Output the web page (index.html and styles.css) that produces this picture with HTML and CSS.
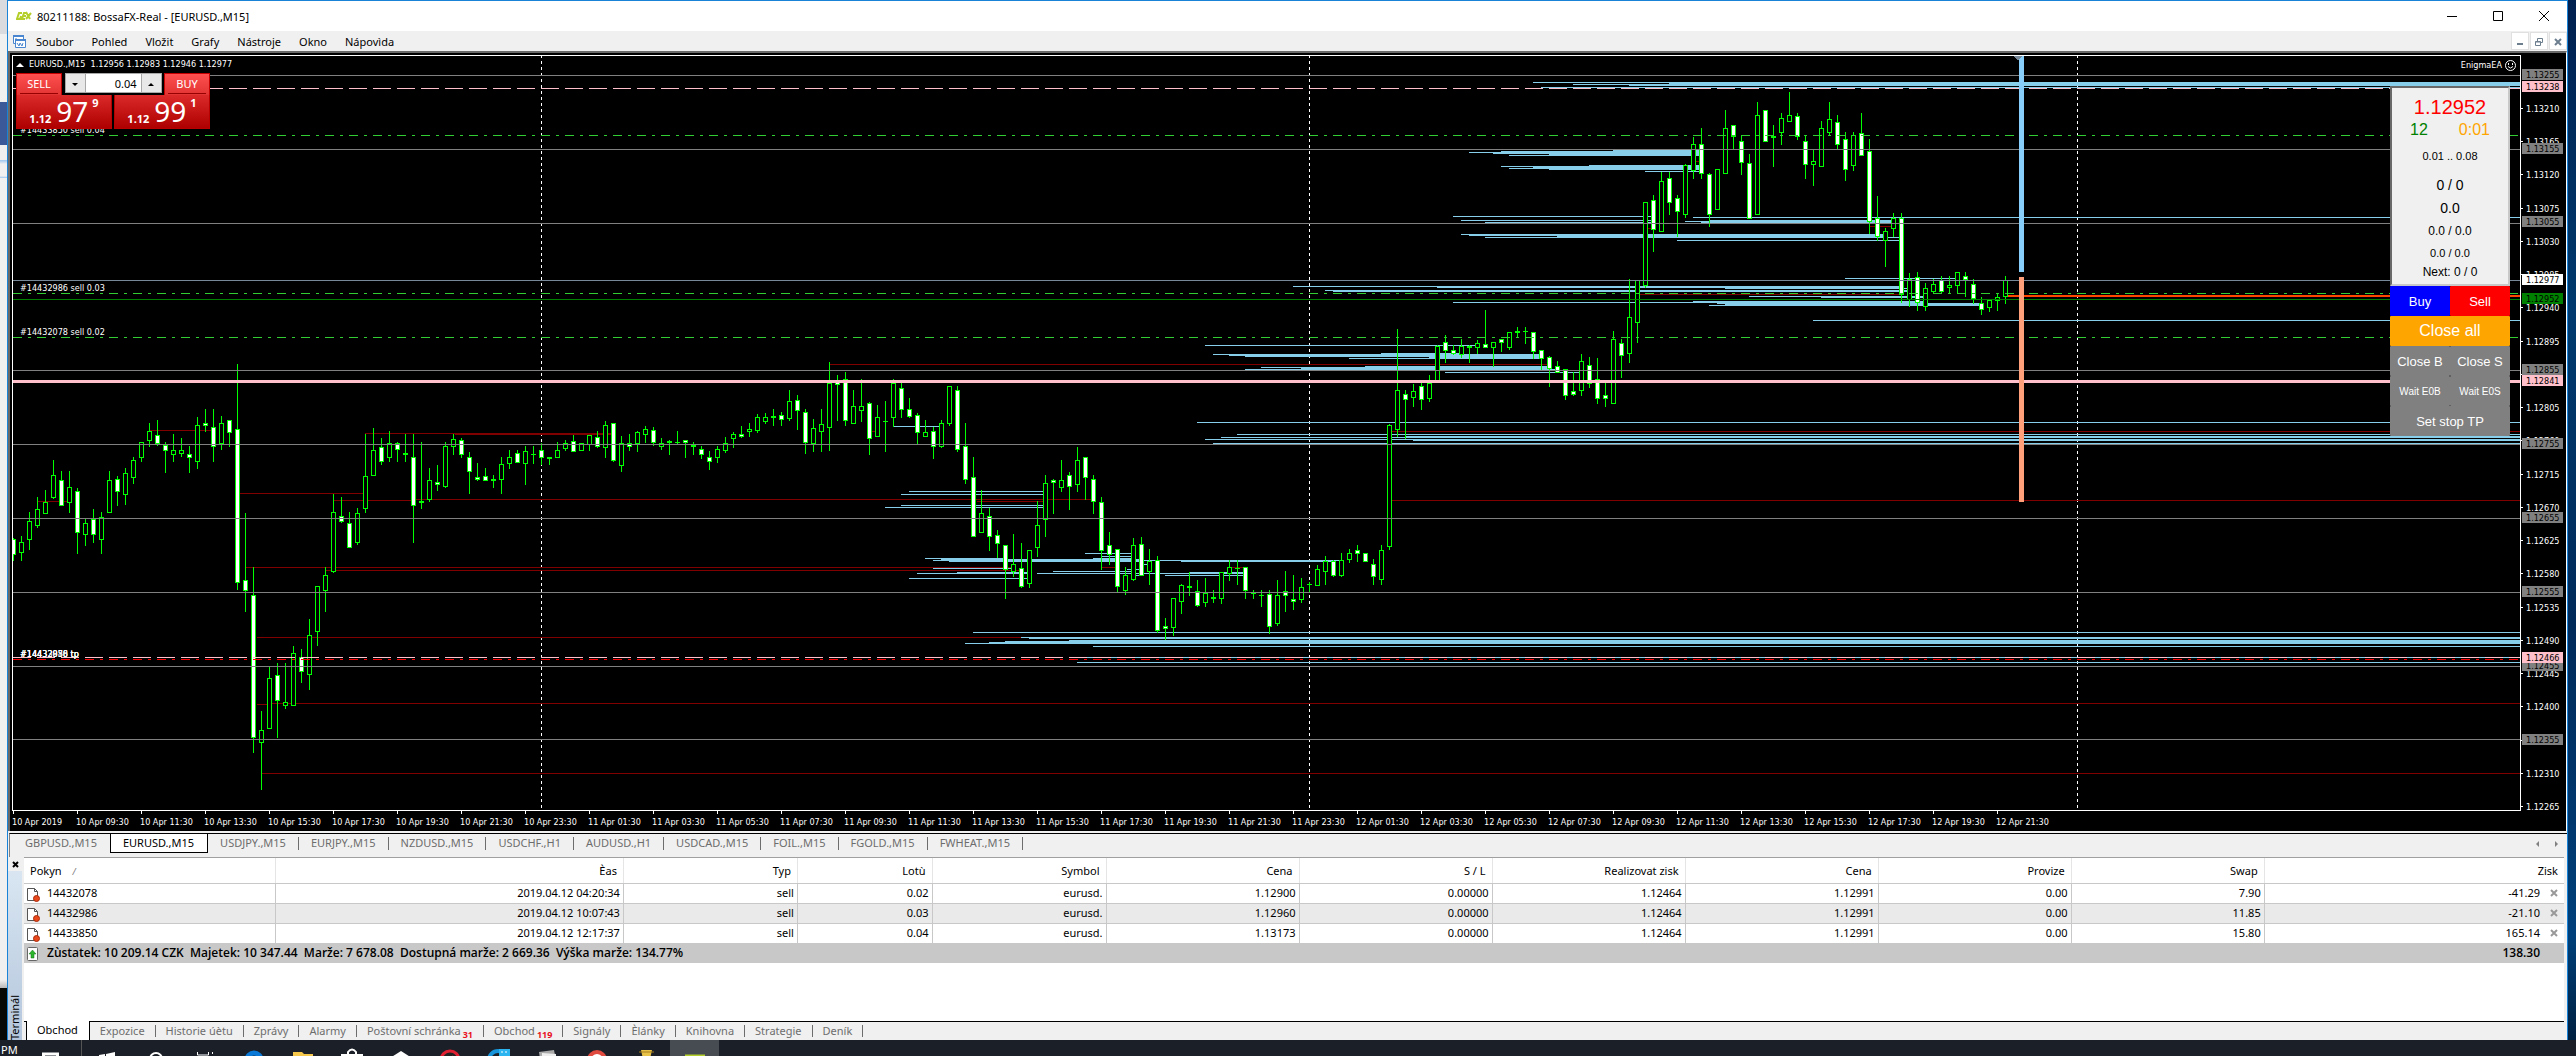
FILE: index.html
```html
<!DOCTYPE html>
<html lang="cs">
<head>
    <meta charset="UTF-8">
    <meta name="viewport" content="width=device-width, initial-scale=1.0">
    <title>80211188: BossaFX-Real - [EURUSD.,M15]</title>
    <link rel="stylesheet" href="styles.css">
</head>
<body>
    <div class="desktop">
        <div class="behind-left"></div>
        <div class="window">
            <header class="titlebar">
                <svg class="logo" width="16" height="10" viewBox="0 0 16 10" fill="none" stroke="#b5cf2a" stroke-width="2"><path d="M6 2H3L1 8h3l1-3M11 2H8L6 8h3M7 5h3M10 1l4 7M15 2l-5 6"/></svg>
                <h1>80211188: BossaFX-Real - [EURUSD.,M15]</h1>
                <div class="win-buttons">
                    <button aria-label="Minimalizovat"><svg width="10" height="10"><path d="M0 5.5h10"/></svg></button>
                    <button aria-label="Maximalizovat"><svg width="10" height="10"><path d="M.5 .5h9v9h-9z"/></svg></button>
                    <button aria-label="Zavřít"><svg width="10" height="10"><path d="M0 0l10 10M10 0L0 10"/></svg></button>
                </div>
            </header>
            <nav class="menubar">
                <svg class="menu-icon" width="15" height="15" viewBox="0 0 15 15" fill="#fff" stroke="#4a86cf"><path d="M1.500 1.500h10v8h-10z"/><path d="M1 2h11" stroke-width="2"/><path d="M4 4v3l2-2v3" fill="none"/><path d="M3.500 5.500h10v8h-10z"/><path d="M3 6h11" stroke-width="2"/><path d="M5 9l2 3 1-3 2 3 1-3" fill="none"/></svg>
                <button>Soubor</button>
                <button>Pohled</button>
                <button>Vložit</button>
                <button>Grafy</button>
                <button>Nástroje</button>
                <button>Okno</button>
                <button>Nápovìda</button>
                <div class="mdi-buttons">
                    <button aria-label="Minimalizovat graf"><svg width="8" height="8"><path d="M1 6h6"/></svg></button>
                    <button aria-label="Obnovit graf"><svg width="8" height="8"><path class="thin" d="M2.500 3V.5h5v4H6M.5 3.500h5v4h-5zM.5 4h5"/></svg></button>
                    <button aria-label="Zavřít graf"><svg width="8" height="8"><path d="M1 1l6 6M7 1L1 7"/></svg></button>
                </div>
            </nav>

            <main class="chart">
                <div class="plot">
                    <svg id="plot" width="100%" height="754"></svg>
                    <div class="chart-title"><span class="caret"></span>EURUSD.,M15&nbsp; 1.12956 1.12983 1.12946 1.12977</div>
                    <div class="ea-name">EnigmaEA
                        <svg width="11" height="11" viewBox="0 0 11 11" fill="none" stroke="#fff"><circle cx="5.500" cy="5.500" r="5"/><path d="M3 6.500q2.500 3 5 0M3.500 3v2M7.500 3v2"/></svg>
                    </div>
                    <div class="one-click">
                        <button class="side">SELL</button>
                        <div class="lots">
                            <button aria-label="Méně"><span class="down"></span></button>
                            <input type="text" value="0.04" aria-label="Lotů">
                            <button aria-label="Více"><span class="up"></span></button>
                        </div>
                        <button class="side">BUY</button>
                        <button class="quote"><b>1.12</b><span>97</span><sup>9</sup></button>
                        <button class="quote"><b>1.12</b><span>99</span><sup>1</sup></button>
                    </div>
                    <aside class="ea-panel">
                        <div class="ea-info">
                            <p class="price">1.12952</p>
                            <p class="timer"><span class="green">12</span><span class="orange">0:01</span></p>
                            <p class="range">0.01 .. 0.08</p>
                            <p class="count">0 / 0</p>
                            <p class="total">0.0</p>
                            <p class="pair">0.0 / 0.0</p>
                            <p class="pair-small">0.0 / 0.0</p>
                            <p class="next">Next: 0 / 0</p>
                        </div>
                        <div class="ea-buttons">
                            <button class="buy">Buy</button>
                            <button class="sell">Sell</button>
                            <button class="all wide">Close all</button>
                            <button>Close B</button>
                            <button>Close S</button>
                            <button class="wait">Wait E0B</button>
                            <button class="wait">Wait E0S</button>
                            <button class="wide">Set stop TP</button>
                        </div>
                    </aside>
                </div>
                <svg id="prices" width="45" height="756"></svg>
                <div class="times" id="times"></div>
            </main>

            <nav class="chart-tabs">
                <a href="#">GBPUSD.,M15</a>
                <a href="#" class="active">EURUSD.,M15</a>
                <a href="#">USDJPY.,M15</a>
                <a href="#">EURJPY.,M15</a>
                <a href="#">NZDUSD.,M15</a>
                <a href="#">USDCHF.,H1</a>
                <a href="#">AUDUSD.,H1</a>
                <a href="#">USDCAD.,M15</a>
                <a href="#">FOIL.,M15</a>
                <a href="#">FGOLD.,M15</a>
                <a href="#">FWHEAT.,M15</a>
                <div class="scroll-arrows"><span class="left"></span><span class="right"></span></div>
            </nav>

            <section class="terminal">
                <div class="caption">
                    <button aria-label="Zavřít terminál"><svg width="7" height="7"><path d="M1 1l5 5M6 1L1 6"/></svg></button>
                    <span>Terminál</span>
                </div>
                <div class="terminal-body">
                    <table>
                        <colgroup>
                            <col class="c-order"><col class="c-time"><col class="c-type"><col class="c-lots"><col class="c-symbol">
                            <col class="c-price"><col class="c-price"><col class="c-price"><col class="c-price"><col class="c-price"><col class="c-price"><col>
                        </colgroup>
                        <thead>
                            <tr><th>Pokyn <i>/</i></th><th>Èas</th><th>Typ</th><th>Lotù</th><th>Symbol</th><th>Cena</th><th>S / L</th><th>Realizovat zisk</th><th>Cena</th><th>Provize</th><th>Swap</th><th>Zisk</th></tr>
                        </thead>
                        <tbody id="orders"></tbody>
                        <tfoot>
                            <tr>
                                <td colspan="11"><svg class="row-icon" width="14" height="14" viewBox="0 0 14 14"><rect x="1.500" y=".5" width="10" height="13" rx="1" fill="#fff" stroke="#666"/><path d="M6.500 3L10 7H8v4H5V7H3z" fill="#2db52d" stroke="#157015" stroke-width=".5"/></svg>Zùstatek: 10 209.14 CZK&nbsp; Majetek: 10 347.44&nbsp; Marže: 7 678.08&nbsp; Dostupná marže: 2 669.36&nbsp; Výška marže: 134.77%</td>
                                <td>138.30</td>
                            </tr>
                        </tfoot>
                    </table>
                    <nav class="terminal-tabs">
                        <a href="#" class="active">Obchod</a>
                        <a href="#">Expozice</a>
                        <a href="#">Historie úètu</a>
                        <a href="#">Zprávy</a>
                        <a href="#">Alarmy</a>
                        <a href="#">Poštovní schránka<sub>31</sub></a>
                        <a href="#">Obchod<sub>119</sub></a>
                        <a href="#">Signály</a>
                        <a href="#">Èlánky</a>
                        <a href="#">Knihovna</a>
                        <a href="#">Strategie</a>
                        <a href="#">Deník</a>
                    </nav>
                </div>
            </section>
        </div>
        <div class="behind-right"></div>
    </div>

    <footer class="taskbar">
        <span class="clock">PM</span>
        <span class="first"><svg width="24" height="24"><path d="M5.500 6h14v14h-14z" fill="none" stroke="#fff" stroke-width="3"/></svg></span>
        <span><svg width="24" height="24" fill="#fff"><path d="M4 7l6-1v7H4zM11 6l9-2v9h-9z"/></svg></span>
        <span><svg width="24" height="24" fill="none" stroke="#fff" stroke-width="2"><circle cx="12" cy="11" r="6"/></svg></span>
        <span><svg width="24" height="24" fill="none" stroke="#fff"><path d="M4.500 4v3h11V4M19.500 4v2M19.500 8v8M4.500 16V9.500h11"/></svg></span>
        <span><svg width="24" height="24" fill="none" stroke="#0a78d7" stroke-width="5"><circle cx="12" cy="12" r="7"/></svg></span>
        <span><svg width="24" height="24"><path d="M2 4h9l2 2h9v14H2z" fill="#f5c84c"/><path d="M2 8h20v10H2z" fill="#fde59a"/></svg></span>
        <span><svg width="24" height="24"><path d="M8 8V4q4-5 8 0v4" fill="none" stroke="#fff" stroke-width="2"/><path d="M1 6h22v14H1z" fill="#fff"/></svg></span>
        <span><svg width="24" height="24" fill="#fff"><path d="M1 10l11-7 11 7v12H1z"/></svg></span>
        <span><svg width="24" height="24"><circle cx="12" cy="12" r="9" fill="#222" stroke="#e02030" stroke-width="3"/><path d="M9 9l3 3 3-4" stroke="#e02030" stroke-width="2" fill="none"/></svg></span>
        <span><svg width="24" height="24"><circle cx="11" cy="12" r="9" fill="none" stroke="#1795dc" stroke-width="4"/><path d="M12 1h11v9H12z" fill="#2cb4f0"/><path d="M15 3v2M19 3v2" stroke="#fff"/></svg></span>
        <span><svg width="24" height="24"><path d="M3 4l15-2 3 16H5z" fill="#aaa"/><path d="M6 5l14 1v14H6z" fill="#eee"/></svg></span>
        <span><svg width="24" height="24"><circle cx="12" cy="12" r="10" fill="#e04a3f"/><circle cx="12" cy="12" r="5" fill="#4a8af4" stroke="#fff" stroke-width="2"/></svg></span>
        <span><svg width="24" height="24"><path d="M7 2h11l-2 9h-7z" fill="#e8c34a"/><path d="M5 4h15" stroke="#a67c1a"/></svg></span>
        <span class="running"><svg width="24" height="24"><path d="M2 8h20" stroke="#b5cf2a" stroke-width="3"/></svg></span>
    </footer>
    <script src="chart.js"></script>
</body>
</html>
```
FILE: styles.css
```css
* {
    box-sizing: border-box;
}
body {
    margin: 0;
    min-height: 100vh;
    display: flex;
    flex-direction: column;
    font-family: "Noto Sans", "Open Sans", sans-serif;
    font-size: 11px;
    background: #1b2028;
    color: #000;
}
button, input {
    font: inherit;
    margin: 0;
    padding: 0;
    border: none;
    background: none;
    color: inherit;
}
a {
    color: inherit;
    text-decoration: none;
}
.desktop {
    flex: 1;
    display: flex;
}
.behind-left {
    width: 7px;
    background: linear-gradient(#d9dbde 34px, #f0f0f0 34px, #f0f0f0 102px, #3b5998 102px, #3b5998 145px, #f0f0f0 145px, #f0f0f0 160px, #9cc4ee 160px, #f0f0f0 164px, #f0f0f0 176px, #9cc4ee 178px, #f0f0f0 178px, #f0f0f0 980px, #b8b8b8 988px, #050805 988px);
}
.behind-right {
    width: 8px;
    background: linear-gradient(#002050, #003a6e 30%, #002a5a 60%, #00407a 90%, #002040);
}
.window {
    flex: 1;
    min-width: 0;
    display: flex;
    flex-direction: column;
    background: #f0f0f0;
    border: 1px solid #1883d7;
    border-bottom: none;
}

/* title + menu */
.titlebar {
    height: 30px;
    display: flex;
    align-items: center;
    background: #fff;
    padding-left: 8px;
}
.titlebar h1 {
    margin: 0 auto 0 5px;
    font-size: 11px;
    font-weight: normal;
}
.win-buttons {
    display: flex;
}
.win-buttons button {
    width: 46px;
    height: 29px;
}
.win-buttons svg {
    fill: none;
    stroke: #000;
}
.menubar {
    height: 20px;
    display: flex;
    align-items: center;
    padding-left: 4px;
}
.menubar > button {
    padding: 0 9px;
}
.mdi-buttons {
    display: flex;
    gap: 1px;
    margin-left: auto;
}
.mdi-buttons button {
    width: 18px;
    height: 18px;
    background: #fff;
    border: 1px solid #e0e0e0;
}
.mdi-buttons svg {
    fill: none;
    stroke: #6d7f8f;
    stroke-width: 2;
}
.mdi-buttons .thin {
    stroke-width: 1;
}

/* chart */
.chart {
    display: grid;
    grid-template-columns: 1fr 45px;
    background: #000;
    color: #fff;
    font-family: "DejaVu Sans Condensed", "Noto Sans", sans-serif;
    font-size: 9px;
    border-top: 2px solid #696969;
    border-left: 2px solid #696969;
    border-right: 1px solid #fff;
    padding: 2px 0 0 2px;
}
.plot {
    position: relative;
    border: 1px solid #fff;
    height: 756px;
}
.plot > svg, #prices {
    display: block;
}
.times {
    grid-column: 1 / -1;
    display: flex;
    height: 20px;
    line-height: 17px;
    white-space: nowrap;
    overflow: hidden;
}
.times span {
    width: 64px;
    flex: none;
}
.times span::before {
    content: "";
    display: block;
    width: 1px;
    height: 3px;
    margin-left: 1px;
    background: #fff;
}
.chart-title {
    position: absolute;
    left: 3px;
    top: 2px;
    line-height: 12px;
}
.caret {
    display: inline-block;
    border: 4px solid transparent;
    border-top: none;
    border-bottom-color: #fff;
    margin-right: 5px;
}
.ea-name {
    position: absolute;
    right: 4px;
    top: 3px;
    display: flex;
    gap: 3px;
    align-items: center;
    line-height: 12px;
}

.one-click {
    position: absolute;
    left: 3px;
    top: 17px;
    width: 194px;
    display: flex;
    flex-wrap: wrap;
    justify-content: space-between;
    font-family: "Noto Sans", sans-serif;
    background: #000;
}
.side {
    width: 46px;
    height: 22px;
    font-size: 11px;
    line-height: 19px;
    color: #fff;
    background: linear-gradient(#ff5050, #e33434);
    border: 1px solid #c40000;
    border-bottom: none;
}
.side::after {
    content: "";
    display: block;
    height: 2px;
    margin: 0 3px;
    border-top: 1px solid #960000;
    border-bottom: 1px solid #ff7a7a;
}
.lots {
    width: 97px;
    height: 20px;
    display: flex;
    background: #fff;
    border: 1px solid #a8a8a8;
}
.lots button {
    width: 19px;
    background: #e8e8e8;
}
.lots input {
    flex: 1;
    min-width: 0;
    text-align: right;
    padding-right: 4px;
    font-size: 11px;
    color: #000;
    border: solid #a8a8a8;
    border-width: 0 1px;
}
.up, .down {
    display: inline-block;
    vertical-align: middle;
    border: 3px solid transparent;
}
.up {
    border-top: none;
    border-bottom-color: #000;
}
.down {
    border-bottom: none;
    border-top-color: #000;
}
.quote {
    width: 96px;
    height: 34px;
    display: flex;
    justify-content: center;
    align-items: flex-end;
    color: #fff;
    background: linear-gradient(#dc2a2a, #ae0000);
    border: 1px solid #b80000;
    border-top: none;
}
.quote b {
    font-size: 11px;
    line-height: 18px;
    margin-right: 5px;
}
.quote span {
    font-size: 28px;
    line-height: 33px;
}
.quote sup {
    font-size: 11px;
    font-weight: bold;
    line-height: 16px;
    align-self: flex-start;
    margin-left: 4px;
}

/* expert advisor panel */
.ea-panel {
    position: absolute;
    right: 10px;
    top: 30px;
    width: 120px;
    font-family: "Liberation Sans", Arial, sans-serif;
    text-align: center;
}
.ea-info {
    background: #f0f0f0;
    color: #000;
    border: 2px solid #696969;
    border-right-color: #c8c8c8;
    border-bottom-color: #c8c8c8;
    padding: 7px 0 1px;
}
.ea-info p {
    margin: 0;
}
.ea-info .price { font-size: 20px; line-height: 24px; color: #f00; }
.ea-info .timer { font-size: 16px; line-height: 22px; display: flex; justify-content: center; gap: 31px; }
.ea-info .range { font-size: 11px; line-height: 30px; }
.ea-info .count { font-size: 14px; line-height: 28px; }
.ea-info .total { font-size: 14px; line-height: 18px; }
.ea-info .pair { font-size: 12px; line-height: 28px; }
.ea-info .pair-small { font-size: 11px; line-height: 16px; }
.ea-info .next { font-size: 12px; line-height: 22px; }
.green { color: #008000; }
.orange { color: #ffa500; }
.ea-buttons {
    display: grid;
    grid-template-columns: 1fr 1fr;
    grid-auto-rows: 30px;
}
.ea-buttons button {
    background: #808080;
    color: #fff;
    font-size: 13px;
    border-radius: 1px;
}
.ea-buttons .wide { grid-column: span 2; }
.ea-buttons .buy { background: #00f; }
.ea-buttons .sell { background: #f00; }
.ea-buttons .all { background: #ffa500; font-size: 16px; }
.ea-buttons .wait { font-size: 10px; }

/* svg parts */
#plot { shape-rendering: crispEdges; }
#plot text, #prices text {
    font-size: 9px;
    fill: #fff;
}
#prices .on-mark { fill: #000; }
.maroon { stroke: #800000; }
.sky { stroke: #87ceeb; }
.candle { stroke: #0f0; }
.grid-line { stroke: #808080; }
.bid-line { stroke: #778899; }
.ma-line { stroke: #008000; }
.order-line { stroke: #32cd32; stroke-dasharray: 9 6 3 6; }
.tp-line { stroke: #f00; stroke-dasharray: 9 6 3 6; }
.pink-dash { stroke: #ffc0cb; stroke-dasharray: 18 6; }
.pink-bold { stroke: #ffc0cb; stroke-width: 3; }
.day { stroke: #fff; stroke-dasharray: 3 3; }

/* chart tabs */
.chart-tabs {
    display: flex;
    height: 24px;
    margin: 2px 0 0 1px;
    padding-bottom: 4px;
    border-top: 1px solid #000;
    border-left: 1px solid #808080;
    color: #6d6d6d;
}
.chart-tabs a {
    position: relative;
    padding: 0 13px 0 12px;
    line-height: 18px;
}
.chart-tabs a:first-child {
    padding-left: 15px;
}
.chart-tabs a::after, .terminal-tabs a::after {
    content: "";
    position: absolute;
    right: 0;
    top: 3px;
    bottom: 3px;
    border-right: 1px solid #6d6d6d;
}
.chart-tabs a:first-child::after, a.active::after {
    display: none;
}
.chart-tabs .active {
    background: #fff;
    color: #000;
    border: solid #000;
    border-width: 0 1px 1px;
}
.scroll-arrows {
    margin-left: auto;
    display: flex;
    align-items: center;
    gap: 16px;
    padding-right: 9px;
}
.scroll-arrows span {
    border: 3px solid transparent;
}
.scroll-arrows .left { border-left: none; border-right-color: #808080; }
.scroll-arrows .right { border-right: none; border-left-color: #808080; }

/* terminal */
.terminal {
    flex: 1;
    display: flex;
    border-right: 3px solid #f0f0f0;
}
.caption {
    width: 16px;
    display: flex;
    flex-direction: column;
    border-right: 2px solid #f0f0f0;
    overflow: hidden;
}
.caption button {
    height: 14px;
    line-height: 10px;
}
.caption button svg {
    stroke: #000;
    stroke-width: 2;
}
.caption span {
    flex: 1;
    writing-mode: vertical-rl;
    transform: rotate(180deg);
    line-height: 14px;
    background: linear-gradient(#b4c6dc, #d9e6f2);
}
.terminal-body {
    flex: 1;
    min-width: 0;
    display: flex;
    flex-direction: column;
    background: #fff;
    border-top: 1px solid #a0a0a0;
}
table {
    width: 100%;
    table-layout: fixed;
    border-collapse: collapse;
}
.c-order { width: 9.900%; }
.c-time { width: 13.700%; }
.c-type { width: 6.850%; }
.c-lots { width: 5.300%; }
.c-symbol { width: 6.850%; }
.c-price { width: 7.600%; }
th {
    height: 25px;
    padding: 0 6px 0 0;
    font-weight: normal;
    text-align: right;
    border-right: 1px solid #e5e5e5;
    border-bottom: 1px solid #c8c8c8;
}
th:first-child {
    text-align: left;
    padding-left: 6px;
}
th i {
    font-size: 9px;
    color: #777;
    margin-left: 8px;
}
td {
    height: 20px;
    padding: 0 3px 0 0;
    line-height: 18px;
    text-align: right;
    border-right: 1px solid #c8c8c8;
    border-bottom: 1px solid #c8c8c8;
    white-space: nowrap;
}
td:first-child {
    text-align: left;
    padding-left: 2px;
}
tbody tr:nth-child(even) {
    background: #eaeaea;
}
th:last-child, td:last-child {
    border-right: none;
}
td:last-child {
    padding-right: 6px;
}
tfoot td {
    background: #c8c8c8;
    font-family: "Open Sans", "Noto Sans", sans-serif;
    font-size: 12px;
    font-weight: 600;
    border: none;
}
tfoot td:last-child {
    padding-right: 24px;
}
.row-icon {
    vertical-align: middle;
    margin-right: 7px;
}
.close-order {
    margin-left: 9px;
    width: 9px;
}
.close-order svg {
    stroke: #999;
    stroke-width: 2;
}
.terminal-tabs {
    display: flex;
    height: 19px;
    margin-top: auto;
    padding-left: 2px;
    background: #f0f0f0;
    border-top: 1px solid #000;
    color: #6d6d6d;
}
.terminal-tabs a {
    position: relative;
    padding: 0 11px 0 10px;
    line-height: 18px;
    white-space: nowrap;
}
.terminal-tabs .active {
    margin-top: -1px;
    background: #fff;
    color: #000;
    border: solid #000;
    border-width: 0 1px;
}
.terminal-tabs sub {
    font-size: 9px;
    font-weight: bold;
    line-height: 0;
    color: #e81123;
    margin-left: 2px;
}

/* taskbar */
.taskbar {
    height: 16px;
    overflow: hidden;
    display: flex;
    background: #1b2028;
}
.taskbar span {
    width: 49px;
    flex: none;
    padding-top: 8px;
    text-align: center;
}
.taskbar .clock {
    width: 24px;
    padding: 0 0 0 1px;
    line-height: 20px;
    text-align: left;
    color: #fff;
}
.taskbar .first {
    width: 58px;
    padding-right: 6px;
    border-right: 1px solid #555;
}
.taskbar .running {
    background: #474c52;
}
```
FILE: chart.js
```js
// candles: high, body top, body bottom, low, 1 = up / 0 = down, one every 8px
const candles = [
    [538,539,554,561,0],[536,542,552,561,1],[512,521,539,550,1],[497,509,525,528,1],[490,502,513,513,1],
    [460,475,497,499,1],[471,480,505,506,0],[471,487,502,513,1],[488,491,532,554,0],[518,523,534,546,1],
    [509,519,534,543,0],[512,517,539,554,1],[471,480,512,512,1],[476,479,491,506,0],[468,473,494,505,1],
    [457,460,477,484,1],[442,442,457,462,1],[423,431,440,447,1],[420,435,443,446,0],[442,445,450,473,0],
    [434,450,454,462,1],[438,450,453,457,1],[446,454,457,473,0],[417,425,461,469,1],[409,423,425,432,0],
    [409,427,446,462,0],[416,423,443,450,1],[420,420,432,447,0],[364,429,582,590,0],[513,580,590,612,0],
    [567,595,737,753,0],[711,730,742,790,1],[667,678,728,728,1],[663,675,700,738,0],[663,702,705,709,1],
    [646,653,705,705,1],[649,657,671,683,0],[619,635,674,690,1],[586,586,631,646,1],[567,575,590,612,1],
    [494,512,571,573,1],[497,516,521,523,0],[512,523,547,547,0],[508,513,542,545,1],[434,476,508,513,1],
    [428,450,475,476,1],[438,447,461,465,0],[431,443,457,462,1],[442,443,449,462,0],[434,453,454,462,1],
    [434,457,505,543,0],[442,501,502,509,1],[468,480,499,502,1],[465,482,484,491,0],[442,446,486,488,1],
    [434,439,446,455,1],[438,440,454,458,0],[452,457,471,494,0],[463,477,479,481,0],[468,476,480,481,0],
    [475,479,480,488,1],[457,464,479,494,1],[450,457,463,469,1],[450,453,462,463,0],[446,451,463,485,1],
    [446,454,454,464,1],[443,450,457,465,0],[457,457,458,465,1],[442,450,457,458,1],[440,443,448,451,1],
    [435,441,451,452,0],[443,443,450,450,1],[435,435,444,451,1],[431,437,446,448,0],[421,425,447,458,1],
    [423,423,460,462,0],[436,443,465,472,1],[434,443,446,451,0],[431,432,443,452,1],[426,429,434,443,1],
    [427,430,442,446,0],[438,443,446,450,1],[440,441,442,455,1],[431,442,442,444,1],[440,440,442,458,0],
    [442,445,446,455,1],[446,449,454,459,0],[451,457,461,470,0],[446,449,457,463,1],[437,443,450,453,1],
    [432,434,438,448,1],[426,434,436,438,0],[423,429,431,437,1],[414,417,430,433,1],[413,417,421,424,1],
    [409,416,417,426,1],[412,415,419,426,0],[390,401,418,421,1],[395,400,410,430,0],[409,412,442,454,0],
    [419,428,443,452,1],[409,424,431,452,1],[362,383,427,451,1],[375,381,384,421,0],[372,379,420,426,0],
    [390,406,423,424,1],[379,406,410,422,1],[402,403,438,455,0],[405,417,436,437,1],[401,421,421,452,1],
    [379,383,417,427,1],[383,388,409,418,0],[398,409,416,418,0],[413,415,432,444,0],[420,432,436,437,1],
    [427,431,446,459,0],[420,423,446,448,1],[386,386,423,426,1],[386,390,449,452,0],[423,446,479,484,0],
    [457,477,536,537,0],[490,513,532,533,1],[508,516,536,551,0],[530,535,543,558,0],[545,545,569,599,0],
    [534,564,571,577,1],[543,568,586,588,0],[550,550,583,588,1],[501,525,547,557,1],[475,483,519,537,1],
    [479,480,482,514,0],[460,480,487,492,1],[472,475,486,510,0],[447,460,484,492,1],[457,457,477,500,0],
    [475,479,501,514,0],[497,502,550,570,0],[532,545,554,565,0],[549,549,586,592,0],[567,575,590,595,1],
    [538,545,579,581,1],[537,544,575,576,0],[549,561,571,585,1],[556,560,630,633,0],[618,626,628,640,0],
    [598,598,627,636,1],[584,585,601,614,1],[572,586,587,596,1],[580,591,605,607,0],[578,593,602,607,1],
    [590,597,598,603,1],[572,572,598,604,1],[560,567,573,581,1],[560,568,568,585,1],[567,567,590,599,0],
    [590,593,593,599,1],[590,595,595,607,1],[590,594,626,634,0],[580,595,623,626,1],[571,591,595,612,0],
    [575,599,601,610,0],[578,587,599,603,1],[582,584,584,592,1],[565,569,585,585,1],[556,561,571,585,1],
    [560,561,575,577,0],[553,560,575,577,1],[549,553,559,563,1],[545,550,553,562,0],[553,553,561,561,0],
    [559,564,576,585,0],[545,550,579,585,1],[424,425,546,550,1],[329,390,429,437,1],[390,394,399,439,0],
    [384,391,397,407,1],[383,386,399,410,0],[375,383,398,402,1],[345,346,381,381,1],[335,342,350,363,0],
    [345,350,353,355,0],[339,346,354,358,1],[345,346,347,363,1],[340,343,347,354,1],[310,344,347,348,0],
    [342,342,347,367,1],[339,339,342,352,0],[332,332,347,350,1],[327,331,332,337,1],[327,331,331,344,1],
    [332,332,351,359,0],[350,350,358,370,0],[356,357,368,387,0],[361,366,372,373,0],[369,369,395,400,0],
    [372,391,394,396,0],[354,361,390,396,1],[357,365,383,388,0],[358,379,398,404,0],[381,395,398,407,0],
    [331,339,403,404,1],[339,343,355,378,0],[279,317,353,363,1],[280,280,322,343,1],[202,202,285,288,1],
    [195,200,229,252,0],[172,181,231,232,1],[172,178,202,215,0],[195,198,211,237,0],[164,165,214,218,1],
    [137,144,170,179,1],[128,144,173,179,0],[173,174,214,227,0],[169,169,209,210,1],[110,128,173,174,1],
    [125,125,136,149,0],[135,141,162,175,0],[154,163,218,219,0],[102,115,214,214,1],[110,110,141,142,0],
    [125,136,137,167,1],[113,118,132,145,1],[92,115,121,121,1],[113,116,136,140,0],[135,141,164,179,0],
    [150,161,164,186,1],[121,128,166,167,1],[102,119,132,135,1],[115,122,144,149,0],[132,139,169,181,0],
    [132,135,165,171,1],[113,133,155,156,0],[139,151,221,234,0],[196,218,236,241,0],[228,231,240,267,1],
    [213,218,228,237,1],[213,218,294,303,0],[273,279,299,307,1],[272,277,302,311,0],[283,288,306,311,1],
    [279,284,291,294,1],[276,280,291,293,0],[276,285,287,293,1],[272,272,285,293,1],[272,276,279,297,0],
    [279,284,298,304,0],[297,303,309,315,0],[299,300,307,312,1],[293,297,300,311,1],[276,280,296,304,1],
];

const END = 4000;

// level segments: y, from, to
const maroon = [
    [501,38,68],[430,150,212],[493,240,364],[500,334,413],[499,415,1093],[433,365,613],[434,455,613],
    [567,246,1012],[570,326,1020],[637,257,1021],[704,257,268],[703,268,END],[773,262,END],
    [364,829,1548],[431,872,876],[501,977,1045],[567,1102,1117],[567,1229,1245],[161,1695,1700],
    [228,1645,1652],[226,1870,1892],[294,1640,1902],[431,1390,END],[500,1389,END],
];
const sky = [
    [426,893,939],[491,909,1044],[494,901,1044],[505,901,1044],[507,885,1044],
    [558,925,1005],[559,941,1139],[560,933,1341],[561,949,1141],[561,1181,1333],[558,1093,1134],
    [553,1085,1131],[556,1101,1131],[568,933,1012],[572,957,1027],[573,917,1027],[578,909,1027],
    [571,1053,1131],[573,1037,1245],[569,1127,1141],[564,1143,1149],[575,1133,1141],[575,1165,1245],[572,1189,1245],
    [632,973,END],[637,1021,END],[638,1029,END],[640,1069,END],[641,1005,END],[642,989,END],[643,965,END],
    [646,1093,END],[657,1085,END],[662,1077,END],
    [345,1205,1476],[353,1381,1461],[354,1213,1541],[355,1229,1541],[356,1245,1541],[357,1429,1541],[358,1349,1541],
    [366,1365,1549],[367,1261,1549],[368,1301,1549],[369,1245,1557],[372,1445,1580],
    [422,1197,END],[434,1237,END],[436,1405,END],[437,1221,END],[439,1205,END],[440,1413,END],[443,1213,END],
    [320,1813,END],[82,1533,END],[83,1669,END],[84,1573,END],[85,1629,END],[87,1541,END],
    [150,1613,1701],[151,1501,1701],[152,1469,1701],[153,1493,1701],[154,1549,1701],[155,1509,1701],
    [165,1589,1701],[166,1501,1701],[167,1533,1701],[168,1509,1701],[169,1549,1701],[171,1645,1701],
    [216,1453,1653],[220,1461,1653],[222,1485,1653],[217,1693,END],[220,1709,1892],[221,1685,1892],[222,1701,1892],
    [234,1461,1884],[235,1469,1884],[236,1557,1884],[237,1485,1901],[240,1677,1901],
    [278,1845,1960],[286,1293,1901],[287,1437,1901],[288,1725,1909],[290,1325,1909],[291,1333,1909],
    [296,1749,1925],[297,1821,1925],[301,1693,1925],[302,1453,1925],[303,1717,1981],[304,1725,1981],[305,1709,1981],
];

const hline = (cls, y, x1 = 13, x2 = END) => `<path class="${cls}" d="M${x1} ${y + 0.5}H${x2}"/>`;

function drawPlot() {
    let out = '';
    [541, 1309, 2077].forEach(x => out += `<path class="day" d="M${x + 0.5} 55V810"/>`);
    maroon.forEach(s => out += hline('maroon', ...s));
    sky.forEach(s => out += hline('sky', ...s));
    candles.forEach(([high, top, bottom, low, up], i) => {
        const x = 13 + i * 8;
        out += `<path class="candle" d="M${x + 0.5} ${high}V${low}"/>`;
        out += `<rect class="candle" fill="${up ? '#000' : '#fff'}" x="${x - 1.5}" y="${top + 0.5}" width="4" height="${Math.max(bottom - top, 0.1)}"/>`;
    });
    [75, 149, 223, 370, 444, 518, 592, 666, 739].forEach(y => out += hline('grid-line', y));
    out += hline('bid-line', 280);
    [135, 293, 337].forEach(y => out += hline('order-line', y));
    out += hline('ma-line', 299);
    out += hline('pink-dash', 88) + hline('pink-dash', 657) + hline('tp-line', 659) + hline('pink-bold', 381);
    out += '<path d="M2008 296H4000" stroke="#ff4500" stroke-width="2"/>';
    out += '<path d="M2021.500 55V272" stroke="#87cefa" stroke-width="5"/>';
    out += '<path d="M2021.500 277V502" stroke="#ffa07a" stroke-width="5"/>';
    out += '<path d="M2013 56h9l-4 5z" fill="#778899"/>';
    out += '<text x="20" y="133">#14433850 sell 0.04</text>';
    out += '<text x="20" y="291">#14432986 sell 0.03</text>';
    out += '<text x="20" y="335">#14432078 sell 0.02</text>';
    // all three take profits sit on the same price
    ['#14432078 tp', '#14432986 tp', '#14433850 tp'].forEach(t => out += `<text x="20" y="657">${t}</text>`);
    document.getElementById('plot').innerHTML = `<g transform="translate(-13 -56)">${out}</g>`;
}

function drawPrices() {
    const yOf = points => Math.round(53 + (13210 - points) * 0.7386);
    const marks = [
        [13255, '#808080'], [13155, '#808080'], [13055, '#808080'], [12855, '#808080'], [12755, '#808080'],
        [12655, '#808080'], [12555, '#808080'], [12455, '#808080'], [12355, '#808080'],
        [13238, '#ffc0cb'], [12841, '#ffc0cb'], [12466, '#ffc0cb'], [12977, '#fff'], [12952, '#008000'],
    ];
    const marked = marks.map(m => yOf(m[0]));
    let out = '';
    for (let p = 13210; p >= 12265; p -= 45) {
        const y = yOf(p);
        out += `<path d="M0 ${y + 0.5}h2" stroke="#fff"/>`;
        // skip labels a mark would hide completely
        if (!marked.some(m => Math.abs(m - y) < 4)) {
            out += `<text x="5" y="${y + 4}">1.${p}</text>`;
        }
    }
    marks.forEach(([p, fill]) => {
        out += `<rect x="1" y="${yOf(p) - 6}" width="41" height="11" fill="${fill}"/>`;
        out += `<text class="on-mark" x="5" y="${yOf(p) + 3}">1.${p}</text>`;
    });
    document.getElementById('prices').innerHTML = out;
}

function drawTimes() {
    let out = '';
    for (let i = 0; i < 32; i++) {
        const hour = 7 + i * 2;
        const day = 10 + Math.floor(hour / 24);
        const time = i === 0 ? '2019' : String(hour % 24).padStart(2, '0') + ':30';
        out += `<span>${day} Apr ${time}</span>`;
    }
    document.getElementById('times').innerHTML = out;
}

const orders = [
    ['14432078', '2019.04.12 04:20:34', 'sell', '0.02', 'eurusd.', '1.12900', '0.00000', '1.12464', '1.12991', '0.00', '7.90', '-41.29'],
    ['14432986', '2019.04.12 10:07:43', 'sell', '0.03', 'eurusd.', '1.12960', '0.00000', '1.12464', '1.12991', '0.00', '11.85', '-21.10'],
    ['14433850', '2019.04.12 12:17:37', 'sell', '0.04', 'eurusd.', '1.13173', '0.00000', '1.12464', '1.12991', '0.00', '15.80', '165.14'],
];
const orderIcon = '<svg class="row-icon" width="14" height="15" viewBox="0 0 14 15"><path d="M1.500 1.500h7l3 3v9h-10z" fill="#fff" stroke="#555"/><path d="M8.500 1.500v3h3" fill="none" stroke="#555"/><circle cx="10.500" cy="11.500" r="3" fill="#e8481c" stroke="#a82a08"/></svg>';
const closeBtn = '<button class="close-order" aria-label="Zavřít pokyn"><svg width="8" height="8"><path d="M1 1l6 6M7 1L1 7"/></svg></button>';

function drawOrders() {
    document.getElementById('orders').innerHTML = orders.map(row =>
        '<tr>' + row.map((cell, i) => `<td>${i === 0 ? orderIcon : ''}${cell}${i === 11 ? closeBtn : ''}</td>`).join('') + '</tr>'
    ).join('');
}

drawPlot();
drawPrices();
drawTimes();
drawOrders();
```
